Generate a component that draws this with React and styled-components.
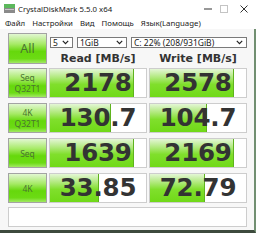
import React from 'react';
import styled, { createGlobalStyle } from 'styled-components';

const GlobalStyle = createGlobalStyle`
  html, body {
    margin: 0;
    padding: 0;
    background: #ffffff;
  }
`;

const rows = [
  { label: ['Seq', 'Q32T1'], read: '2178', write: '2578', readPct: 86, writePct: 86 },
  { label: ['4K', 'Q32T1'], read: '130.7', write: '104.7', readPct: 62, writePct: 58 },
  { label: ['Seq'], read: '1639', write: '2169', readPct: 86, writePct: 86 },
  { label: ['4K'], read: '33.85', write: '72.79', readPct: 50, writePct: 56 },
];

const Window = styled.div`
  width: 256px;
  height: 233px;
  display: flex;
  flex-direction: column;
  overflow: hidden;
  font-family: "Noto Sans", "Open Sans", sans-serif;
  color: #1a1a1a;
`;

const TitleBar = styled.div`
  height: 17px;
  display: flex;
  align-items: center;
  padding-left: 4px;
  background: #ffffff;
`;

const AppIcon = styled.svg`
  width: 11px;
  height: 9px;
  margin-right: 3px;
`;

const Title = styled.span`
  font-size: 7.8px;
  flex: 1;
`;

const WinButton = styled.div`
  width: ${(p) => p.w}px;
  height: 17px;
  display: flex;
  align-items: center;
  justify-content: center;
`;

const MenuBar = styled.div`
  height: 12px;
  display: flex;
  align-items: center;
  gap: 7px;
  padding-left: 5px;
  background: #ffffff;
  font-size: 7.8px;
`;

const Body = styled.div`
  flex: 1;
  display: flex;
  flex-direction: column;
  padding: 4px 0 2px 8px;
  background: #f7f7f7;
  border-right: 2px solid #718f71;
  border-bottom: 3px solid #3d4a3d;
`;

const Grid = styled.div`
  display: grid;
  grid-template-columns: 39px 98px 98px;
  column-gap: 2px;
`;

const TopGrid = styled(Grid)`
  grid-template-rows: 31px;
  margin-bottom: 4px;
`;

const RowsGrid = styled(Grid)`
  grid-auto-rows: 30px;
  row-gap: 5px;
`;

const GreenButton = styled.div`
  box-sizing: border-box;
  border: 1px solid #a3a3a3;
  background: linear-gradient(#e2f7d2 0%, #a6ea66 35%, #66d80c 60%, #6cdb14 85%, #a2e964 100%);
  color: #4a7430;
  display: flex;
  flex-direction: column;
  align-items: center;
  justify-content: center;
  font-size: ${(p) => (p.big ? 12.5 : 8.5)}px;
  line-height: ${(p) => (p.big ? 13 : 11)}px;
`;

const Controls = styled.div`
  grid-column: 2 / 4;
  display: flex;
  flex-direction: column;
`;

const SelectRow = styled.div`
  display: flex;
  gap: 4px;
  margin: 4px 0 0 1px;
  height: 11px;
`;

const Select = styled.div`
  box-sizing: border-box;
  width: ${(p) => p.w}px;
  height: 11px;
  border: 1px solid #7a7a7a;
  background: #ffffff;
  display: flex;
  align-items: center;
  justify-content: space-between;
  padding: 0 3px 0 2px;
  font-size: 8.5px;
`;

const Chevron = () => (
  <svg width="7" height="5" viewBox="0 0 7 5">
    <path d="M0.8 0.8 L3.5 3.6 L6.2 0.8" fill="none" stroke="#222" strokeWidth="1.2" />
  </svg>
);

const Headers = styled.div`
  display: grid;
  grid-template-columns: 98px 98px;
  column-gap: 2px;
  margin-top: 4px;
`;

const Header = styled.div`
  text-align: center;
  font-family: "DejaVu Sans", Verdana, sans-serif;
  font-weight: bold;
  font-size: 11px;
  color: #333333;
`;

const Cell = styled.div`
  position: relative;
  box-sizing: border-box;
  border: 1px solid #cdcdcd;
  background: #ffffff;
  overflow: hidden;
`;

const Bar = styled.div`
  position: absolute;
  top: 0;
  bottom: 0;
  left: 0;
  background: linear-gradient(#e4f6d6 0%, #b0e97c 30%, #80df2c 55%, #70d918 100%);
  border-right: 1px solid #5fb31e;
`;

const Value = styled.div`
  position: relative;
  text-align: center;
  font-family: "DejaVu Sans", Verdana, sans-serif;
  font-weight: bold;
  font-size: 24.5px;
  line-height: 28px;
  color: #333333;
  letter-spacing: -0.2px;
`;

const Comment = styled.div`
  box-sizing: border-box;
  width: 239px;
  height: 20px;
  margin-top: 4px;
  border: 1px solid #cdcdcd;
  background: #ffffff;
`;

export default function App() {
  return (
    <>
      <GlobalStyle />
      <Window>
        <TitleBar>
          <AppIcon viewBox="0 0 11 9">
            <rect x="0" y="0" width="11" height="4" fill="#5cb85c" />
            <rect x="0" y="4" width="11" height="5" fill="#8a8a8a" />
            <rect x="1" y="5" width="9" height="1" fill="#c8c8c8" />
          </AppIcon>
          <Title>CrystalDiskMark 5.5.0 x64</Title>
          <WinButton w={16}>
            <svg width="8" height="2"><rect y="0.5" width="8" height="1" fill="#333" /></svg>
          </WinButton>
          <WinButton w={16}>
            <svg width="8" height="8"><rect x="0.5" y="0.5" width="7" height="7" fill="none" stroke="#c4c4c4" /></svg>
          </WinButton>
          <WinButton w={24}>
            <svg width="8" height="8"><path d="M0.5 0.5 L7.5 7.5 M7.5 0.5 L0.5 7.5" stroke="#333" strokeWidth="1" /></svg>
          </WinButton>
        </TitleBar>
        <MenuBar>
          <span>Файл</span>
          <span>Настройки</span>
          <span>Вид</span>
          <span>Помощь</span>
          <span>Язык(Language)</span>
        </MenuBar>
        <Body>
          <TopGrid>
            <GreenButton big>All</GreenButton>
            <Controls>
              <SelectRow>
                <Select w={23}><span>5</span><Chevron /></Select>
                <Select w={50}><span>1GiB</span><Chevron /></Select>
                <Select w={116}><span>C: 22% (208/931GiB)</span><Chevron /></Select>
              </SelectRow>
              <Headers>
                <Header>Read [MB/s]</Header>
                <Header>Write [MB/s]</Header>
              </Headers>
            </Controls>
          </TopGrid>
          <RowsGrid>
            {rows.map((r) => (
              <React.Fragment key={r.label.join() + r.read}>
                <GreenButton>
                  {r.label.map((l) => <span key={l}>{l}</span>)}
                </GreenButton>
                <Cell>
                  <Bar style={{ width: `${r.readPct}%` }} />
                  <Value>{r.read}</Value>
                </Cell>
                <Cell>
                  <Bar style={{ width: `${r.writePct}%` }} />
                  <Value>{r.write}</Value>
                </Cell>
              </React.Fragment>
            ))}
          </RowsGrid>
          <Comment />
        </Body>
      </Window>
    </>
  );
}
